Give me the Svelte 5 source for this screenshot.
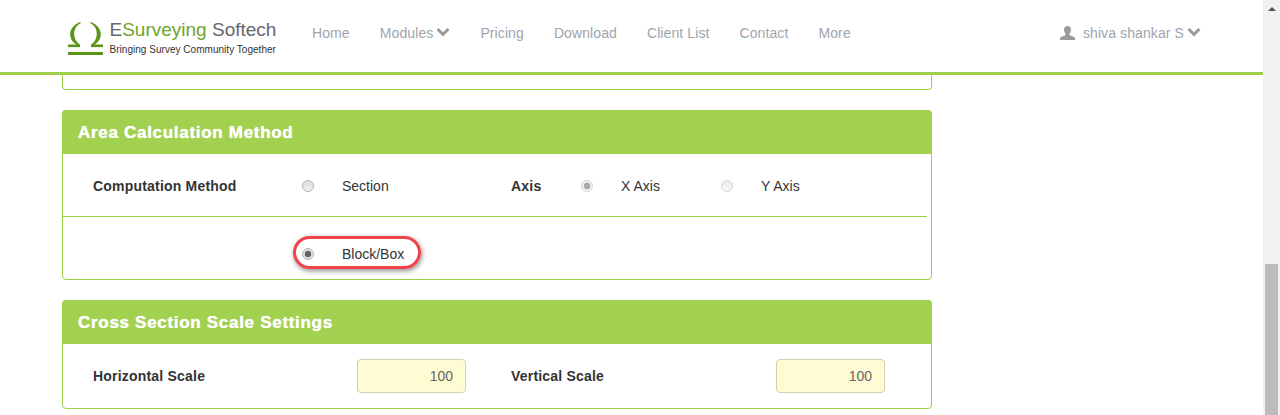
<script lang="ts">
  const menu = [
    { label: 'Home' },
    { label: 'Modules', caret: true },
    { label: 'Pricing' },
    { label: 'Download' },
    { label: 'Client List' },
    { label: 'Contact' },
    { label: 'More' }
  ];
</script>

{#snippet caret()}
  <svg class="caret" viewBox="0 0 14 10" width="14" height="10" aria-hidden="true">
    <path d="M0.5 3 L2.6 0.9 L7 5.2 L11.4 0.9 L13.5 3 L7 9.4 Z" fill="#9a9a9a" />
  </svg>
{/snippet}

<div class="window">
  <div class="page">
    <header class="nav">
      <a class="brand" href="#top">
        <svg class="logo" viewBox="0 0 35 33" width="35" height="33" aria-hidden="true">
          <path d="M12 0 C5 3 1.5 8 2.3 14 C2.9 18 5.5 21 9 23 L12 23 C8.5 20 6.6 17 6.2 13 C5.8 8 8 3.5 13 1 Z" fill="#5a9412" />
          <path d="M23 0 C30 3 33.5 8 32.7 14 C32.1 18 29.5 21 26 23 L23 23 C26.5 20 28.4 17 28.8 13 C29.2 8 27 3.5 22 1 Z" fill="#5a9412" />
          <rect x="0" y="22.5" width="12" height="2.6" fill="#5a9412" />
          <rect x="23" y="22.5" width="12" height="2.6" fill="#5a9412" />
          <rect x="0" y="30" width="35" height="3" fill="#5a9412" />
        </svg>
        <span class="brand-text">
          <span class="brand-name">E<b>Surveying</b> Softech</span>
          <span class="brand-tag">Bringing Survey Community Together</span>
        </span>
      </a>
      <nav class="menu">
        {#each menu as item}
          <a href="#top">{item.label}{#if item.caret}{@render caret()}{/if}</a>
        {/each}
      </nav>
      <a class="user" href="#top">
        <svg viewBox="0 0 15 14" width="15" height="14" aria-hidden="true">
          <path d="M7.5 0 C10 0 11 1.8 11 3.8 C11 5.6 10.2 7 9.4 7.8 L9.4 9 L15 11.6 L15 14 L0 14 L0 11.6 L5.6 9 L5.6 7.8 C4.8 7 4 5.6 4 3.8 C4 1.8 5 0 7.5 0 Z" fill="#9a9a9a" />
        </svg>
        <span>shiva shankar S</span>{@render caret()}
      </a>
    </header>

    <main class="content">
      <div class="card-tail"></div>

      <section class="card">
        <h2>Area Calculation Method</h2>
        <div class="row method">
          <strong>Computation Method</strong>
          <label class="opt"><input type="radio" name="method" />Section</label>
          <strong>Axis</strong>
          <label class="opt"><input type="radio" name="axis" checked disabled />X Axis</label>
          <label class="opt"><input type="radio" name="axis" disabled />Y Axis</label>
        </div>
        <div class="row second">
          <span></span>
          <label class="opt marked"><input type="radio" name="method" checked />Block/Box</label>
        </div>
      </section>

      <section class="card">
        <h2>Cross Section Scale Settings</h2>
        <div class="row scale">
          <strong>Horizontal Scale</strong>
          <input class="num" type="text" value="100" />
          <strong>Vertical Scale</strong>
          <input class="num" type="text" value="100" />
        </div>
      </section>
    </main>
  </div>

  <div class="scrollbar">
    <span class="arrow"></span>
    <span class="thumb"></span>
  </div>
</div>

<style>
  :global(body) {
    margin: 0;
    font-family: "Liberation Sans", Arial, sans-serif;
    font-size: 14px;
    color: #333;
    background: #fff;
  }
  .window {
    display: flex;
    height: 415px;
    overflow: hidden;
  }
  .page {
    flex: 1;
    min-width: 0;
  }
  .nav {
    display: flex;
    align-items: flex-start;
    height: 72px;
    border-bottom: 3px solid #a0cf4a;
  }
  .brand {
    display: flex;
    margin: 21px 0 0 68px;
    width: 229px;
    text-decoration: none;
  }
  .logo {
    margin-top: 1px;
  }
  .brand-text {
    display: flex;
    flex-direction: column;
    margin-left: 6.5px;
  }
  .brand-name {
    font-size: 19px;
    line-height: 18px;
    white-space: nowrap;
    color: #66666e;
  }
  .brand-name b {
    font-weight: normal;
    color: #6fa52c;
  }
  .brand-tag {
    font-size: 10px;
    line-height: 12px;
    margin-top: 5px;
    letter-spacing: 0.03px;
    white-space: nowrap;
    color: #333;
  }
  .menu {
    display: flex;
    gap: 30px;
    margin: 25px 0 0 15px;
  }
  .menu a {
    color: #9da5ad;
    text-decoration: none;
    line-height: 16px;
    letter-spacing: 0.1px;
  }
  .caret {
    margin-left: 3px;
    vertical-align: 1px;
  }
  .user {
    display: flex;
    align-items: center;
    gap: 8px;
    margin: 25px 0 0 auto;
    padding-right: 62px;
    color: #9da5ad;
    text-decoration: none;
    line-height: 16px;
    letter-spacing: 0.1px;
  }
  .user .caret {
    margin: -2px 0 0 -5px;
  }
  .content {
    width: 870px;
    margin-left: 62px;
  }
  .card-tail {
    height: 14px;
    border: 1px solid #a0cf4a;
    border-top: 0;
    border-radius: 0 0 4px 4px;
    margin-bottom: 20px;
  }
  .card {
    border: 1px solid #a0cf4a;
    border-radius: 4px;
    margin-bottom: 20px;
  }
  h2 {
    margin: -1px -1px 0;
    padding: 0 16px;
    height: 44px;
    line-height: 46px;
    background: #a2d14f;
    border-radius: 4px 4px 0 0;
    color: #fff;
    font-size: 17px;
    font-weight: bold;
    letter-spacing: 0.7px;
    text-shadow: 0 0 1px #fff;
  }
  .row {
    display: grid;
    align-items: center;
    box-sizing: border-box;
    padding-left: 30px;
  }
  .row strong {
    font-size: 14px;
    letter-spacing: 0.2px;
  }
  .method,
  .second {
    grid-template-columns: 209px 209px 70px 140px 140px;
  }
  .method {
    height: 63px;
    padding-top: 2px;
    margin-right: 4px;
    border-bottom: 1px solid #a0cf4a;
  }
  .second {
    height: 62px;
    padding-top: 12px;
  }
  .scale {
    grid-template-columns: 264px 154px 265px 109px;
    height: 64px;
  }
  .opt {
    position: relative;
    display: flex;
    align-items: center;
    gap: 28px;
  }
  .opt input {
    appearance: none;
    width: 12px;
    height: 12px;
    margin: 0;
    border: 1px solid #b4b4b4;
    border-radius: 50%;
    background: linear-gradient(#dcdcdc, #f2f2f2);
  }
  .opt input:checked {
    background: radial-gradient(circle, #666 0 3px, #e4e4e4 3.6px);
  }
  .opt input:disabled {
    opacity: 0.55;
  }
  /* red callout drawn over the Block/Box option */
  .marked::after {
    content: "";
    position: absolute;
    left: -9px;
    top: -10px;
    width: 122px;
    height: 27px;
    border: 3px solid #ef424a;
    border-radius: 17px;
    box-shadow: 1px 2px 5px rgba(0, 0, 0, 0.45);
  }
  .num {
    box-sizing: border-box;
    width: 109px;
    height: 34px;
    padding: 0 12px;
    border: 1px solid #d4d0b4;
    border-radius: 4px;
    background: #fffbd3;
    color: #666;
    font: 14px "Liberation Sans", Arial, sans-serif;
    text-align: right;
  }
  .scrollbar {
    display: flex;
    flex-direction: column;
    align-items: center;
    flex: 0 0 17px;
    background: #f1f1f1;
  }
  .arrow {
    margin-top: 7px;
    border: 4px solid transparent;
    border-top: 0;
    border-bottom: 4px solid #505050;
  }
  .thumb {
    width: 13px;
    height: 160px;
    margin-top: 253px;
    background: #bcbcbc;
  }
</style>
